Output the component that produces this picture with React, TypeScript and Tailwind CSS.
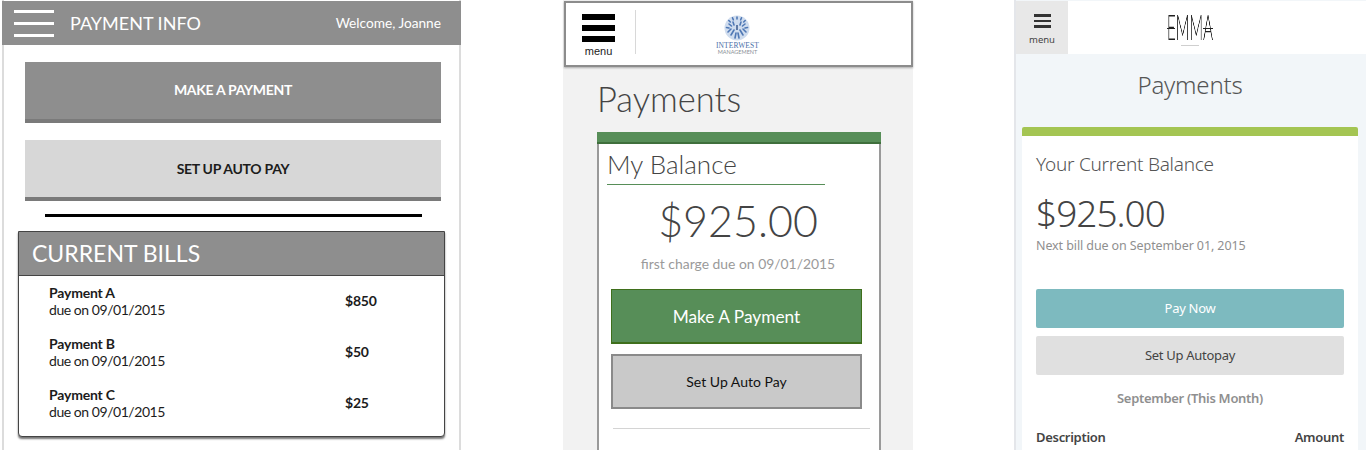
import React from 'react';

const bills = [
  { name: 'Payment A', amount: '$850' },
  { name: 'Payment B', amount: '$50' },
  { name: 'Payment C', amount: '$25' },
];

const WireframePanel = () => (
  <div className="w-[459px] ml-[2px] h-[450px] shrink-0 border-x-2 border-[#dcdcdc] font-['Lato',sans-serif]">
    <div className="-mx-[2px] h-[44px] mt-[1px] bg-[#8e8e8e] flex items-center pl-[12px] pr-[20px] text-white">
      <div className="w-[40px] flex flex-col gap-[9px]">
        <div className="h-[3px] bg-white" />
        <div className="h-[3px] bg-white" />
        <div className="h-[3px] bg-white" />
      </div>
      <span className="ml-[16px] text-[18px] leading-none">PAYMENT INFO</span>
      <span className="ml-auto text-[13.7px] leading-none">Welcome, Joanne</span>
    </div>
    <div className="pt-[17px]">
      <div className="ml-[21px] w-[416px] h-[61px] bg-[#8e8e8e] border-b-[4px] border-[#7a7a7a] flex items-center justify-center pb-[2px] text-white font-bold text-[14px] tracking-[-0.3px]">
        MAKE A PAYMENT
      </div>
      <div className="ml-[21px] w-[416px] mt-[17px] h-[61px] bg-[#d7d7d7] border-b-[4px] border-[#7a7a7a] flex items-center justify-center text-[#1c1c1c] font-bold text-[14px] tracking-[-0.3px]">
        SET UP AUTO PAY
      </div>
      <div className="ml-[41px] w-[377px] mt-[13px] h-[3px] bg-black" />
      <div className="ml-[14px] mt-[14px] w-[427px] h-[206px] border border-[#444] rounded-b-[4px] shadow-[0_2px_2px_rgba(0,0,0,0.55)] bg-white overflow-hidden">
        <div className="h-[44px] bg-[#8e8e8e] border-b border-[#444] flex items-center pl-[13px] text-white text-[23px] leading-none">
          CURRENT BILLS
        </div>
        <div className="pl-[30px] pt-[8px] flex flex-col gap-[17px]">
          {bills.map(bill => (
            <div key={bill.name} className="flex items-center text-[14px] leading-[17px] text-[#1c1c1c]">
              <div className="w-[296px]">
                <div className="font-bold tracking-[-0.2px]">{bill.name}</div>
                <div className="tracking-[-0.45px]">due on 09/01/2015</div>
              </div>
              <div className="font-bold tracking-[-0.2px] -mt-[2px]">{bill.amount}</div>
            </div>
          ))}
        </div>
      </div>
    </div>
  </div>
);

const InterwestLogo = () => (
  <div className="flex flex-col items-center">
    <svg width="26" height="26" viewBox="0 0 26 26">
      <circle cx="13" cy="13" r="12.5" fill="#cfdcee" />
      <g stroke="#4f78b5" strokeWidth="1.6" strokeLinecap="round">
        <path d="M13 2v2M8.5 2.8l.8 2M17.5 2.8l-.8 2M4.8 5.5l1.5 1.5M21.2 5.5l-1.5 1.5" />
        <path d="M9 7l1 3M17 7l-1 3M5 9l2.5 2M21 9l-2.5 2M2.5 12.5l2.5.5M23.5 12.5l-2.5.5" />
        <path d="M4 17l3-3M22 17l-3-3M7 20l3-5M19 20l-3-5M11 23l1-5M15 23l-1-5" />
      </g>
      <path d="M13 10v5" stroke="#2f4f86" strokeWidth="1.4" />
    </svg>
    <span className="mt-[1px] text-[7.5px] leading-[7px] tracking-[0.1px] text-[#4a6fa8] font-['Liberation_Serif',serif]">INTERWEST</span>
    <span className="text-[5.5px] leading-[6px] text-[#8a8f96]">MANAGEMENT</span>
  </div>
);

const InterwestPanel = () => (
  <div className="ml-[102px] w-[350px] h-[450px] shrink-0 bg-[#f2f2f2] font-['Lato',sans-serif]">
    <div className="h-[66px] mt-[1px] ml-[1px] bg-white border-2 border-[#8c8c8c] shadow-[0_1px_2px_rgba(0,0,0,0.3)] flex items-center">
      <div className="w-[70px] h-full flex items-center relative">
        <div className="ml-[16px] w-[33px] flex flex-col items-center">
          <div className="w-full flex flex-col gap-[5px] mt-[4px]">
            <div className="h-[6px] bg-black" />
            <div className="h-[6px] bg-black" />
            <div className="h-[6px] bg-black" />
          </div>
          <span className="font-['Liberation_Sans',sans-serif] text-[11px] leading-[13px] mt-[3px] text-[#222]">menu</span>
        </div>
        <div className="absolute right-0 top-[7px] h-[44px] w-px bg-[#d8d8d8]" />
      </div>
      <div className="ml-[80px] mt-[1px]">
        <InterwestLogo />
      </div>
    </div>
    <h1 className="ml-[34px] mt-[10px] text-[34.5px] leading-[44px] font-light text-[#444]">Payments</h1>
    <div className="ml-[34px] mt-[11px] w-[284px] h-[340px] border-x-2 border-[#9a9a9a] bg-white">
      <div className="-mx-[2px] h-[12px] bg-[#578e58] border-b-[2px] border-[#3f6f3c]" />
      <div className="ml-[8px] w-[218px] pt-[5px] h-[41px] border-b border-[#578e58] text-[26px] leading-[30px] font-light text-[#444]">My Balance</div>
      <div className="text-center text-[43px] leading-[58px] font-light text-[#444] mt-[7px] -ml-[2px]">$925.00</div>
      <div className="text-center text-[13.9px] leading-[18px] text-[#9a9a9a] mt-[5px] -ml-[2px]">first charge due on 09/01/2015</div>
      <div className="ml-[12px] w-[251px] h-[55px] mt-[16px] pt-[1px] bg-[#578e58] border border-[#3f6f1c] border-b-2 flex items-center justify-center text-white text-[17.3px]">Make A Payment</div>
      <div className="ml-[12px] w-[251px] h-[55px] mt-[10px] bg-[#c9c9c9] border-2 border-[#8a8a8a] flex items-center justify-center text-[#111] text-[14px]">Set Up Auto Pay</div>
      <div className="ml-[14px] w-[257px] h-px mt-[19px] bg-[#d4d4d4]" />
    </div>
  </div>
);

const EmmaLogo = () => (
  <div className="relative w-[46px] flex flex-col items-center">
    <div className="w-[46px] h-[26px] flex justify-center">
      <span className="shrink-0 scale-x-[0.42] [will-change:transform] text-[36px] leading-[26px] font-light font-['Lato',sans-serif] text-[#222]">EMMA</span>
    </div>
    <div className="absolute left-0 top-[15px] w-[8px] h-px bg-[#222]" />
    <div className="absolute right-0 top-[15px] w-[10px] h-px bg-[#222]" />
    <div className="w-[18px] h-px bg-[#cfcfcf] mt-[6px]" />
  </div>
);

const EmmaPanel = () => (
  <div className="ml-[101px] flex-1 h-[450px] border-l-2 border-[#e4e6ea] bg-[#f2f6f9] font-['Noto_Sans',sans-serif]">
    <div className="h-[53px] mt-[1px] bg-white flex relative">
      <div className="w-[52px] h-full bg-[#e8e8e8] flex flex-col items-center pt-[13px]">
        <div className="w-[17px] flex flex-col gap-[3px]">
          <div className="h-[2.5px] bg-[#333]" />
          <div className="h-[2.5px] bg-[#333]" />
          <div className="h-[2.5px] bg-[#333]" />
        </div>
        <span className="text-[9.5px] leading-[12px] mt-[6px] text-[#444]">menu</span>
      </div>
      <div className="absolute left-[151px] top-[12px]">
        <EmmaLogo />
      </div>
    </div>
    <h1 className="text-center ml-[-2px] mt-[15px] text-[24px] tracking-[-0.2px] leading-[32px] font-light text-[#555]">Payments</h1>
    <div className="ml-[6px] mt-[26px] w-[336px] h-[330px] bg-white rounded-t-[2px]">
      <div className="h-[9px] bg-[#a4c553] rounded-t-[2px]" />
      <div className="px-[14px]">
        <div className="mt-[16px] text-[19px] tracking-[-0.25px] leading-[24px] font-light text-[#555]">Your Current Balance</div>
        <div className="mt-[13px] text-[37px] tracking-[-1px] leading-[48px] font-light text-[#444]">$925.00</div>
        <div className="mt-[1px] text-[12.5px] tracking-[-0.1px] leading-[16px] text-[#8f8f8f]">Next bill due on September 01, 2015</div>
        <div className="mt-[35px] h-[39px] bg-[#7dbabf] rounded-[2px] flex items-center justify-center text-white text-[13px] tracking-[-0.3px]">Pay Now</div>
        <div className="mt-[8px] h-[39px] bg-[#e0e0e0] rounded-[2px] flex items-center justify-center text-[#444] text-[13px] tracking-[-0.3px]">Set Up Autopay</div>
        <div className="mt-[14px] text-center text-[13px] tracking-[-0.3px] leading-[18px] font-semibold text-[#8f8f8f]">September (This Month)</div>
        <div className="mt-[21px] flex justify-between text-[13px] tracking-[-0.3px] leading-[18px] font-semibold text-[#444]">
          <span>Description</span>
          <span>Amount</span>
        </div>
      </div>
    </div>
  </div>
);

export default function App() {
  return (
    <div className="w-[1366px] h-[450px] overflow-hidden bg-white flex">
      <WireframePanel />
      <InterwestPanel />
      <EmmaPanel />
    </div>
  );
}
